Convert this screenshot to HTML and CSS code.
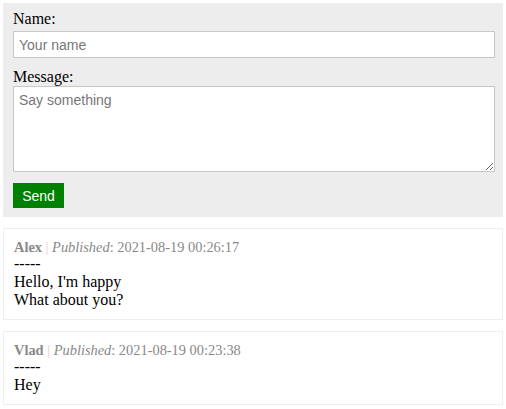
FILE: index.html
```html
<!DOCTYPE html>
<html>
<head>
<meta charset="utf-8">
<link rel="stylesheet" href="styles.css">
</head>
<body>
<form class="post-form">
  <label class="field-label" for="name">Name:</label>
  <input class="text-input" id="name" type="text" placeholder="Your name">
  <label class="field-label msg-label" for="msg">Message:</label>
  <textarea class="text-area" id="msg" placeholder="Say something"></textarea>
  <button class="send-btn" type="button">Send</button>
</form>
<div class="comment">
  <div class="meta"><b class="author">Alex</b> <span class="sep">|</span> <i>Published</i>: 2021-08-19 00:26:17</div>
  <div class="body">-----<br>Hello, I'm happy<br>What about you?</div>
</div>
<div class="comment">
  <div class="meta"><b class="author">Vlad</b> <span class="sep">|</span> <i>Published</i>: 2021-08-19 00:23:38</div>
  <div class="body">-----<br>Hey</div>
</div>
</body>
</html>
```
FILE: styles.css
```css
body {
  margin: 3px;
  font-family: "Liberation Serif", "Times New Roman", serif;
  font-size: 16px;
  color: #000;
}
.post-form {
  background: #ededed;
  padding: 7px 8px 9px 10px;
  margin: 0;
}
.field-label {
  display: block;
  line-height: 18px;
  height: 18px;
}
.text-input {
  display: block;
  box-sizing: border-box;
  width: 100%;
  height: 27px;
  margin: 3px 0 0;
  padding: 0 5px;
  border: 1px solid #c8c8c8;
  font-family: "Liberation Sans", Arial, sans-serif;
  font-size: 14px;
  outline: none;
}
.msg-label {
  margin-top: 10px;
}
.text-area {
  display: block;
  box-sizing: border-box;
  width: 100%;
  height: 86px;
  margin: 0;
  padding: 5px;
  border: 1px solid #c8c8c8;
  font-family: "Liberation Sans", Arial, sans-serif;
  font-size: 14px;
  outline: none;
}
.text-input::placeholder, .text-area::placeholder {
  color: #777;
}
.send-btn {
  display: block;
  margin-top: 11px;
  height: 25px;
  width: 51px;
  padding: 0;
  border: none;
  background: #008000;
  color: #fff;
  font-family: "Liberation Sans", Arial, sans-serif;
  font-size: 14px;
}
.comment {
  margin-top: 11px;
  border: 1px solid #eeeeee;
  padding: 10px 10px;
}
.meta {
  font-size: 14.4px;
  line-height: 16px;
  color: #888;
}
.author {
  color: #888;
}
.sep {
  color: #e8c8c8;
}
.body {
  line-height: 18px;
}
```
